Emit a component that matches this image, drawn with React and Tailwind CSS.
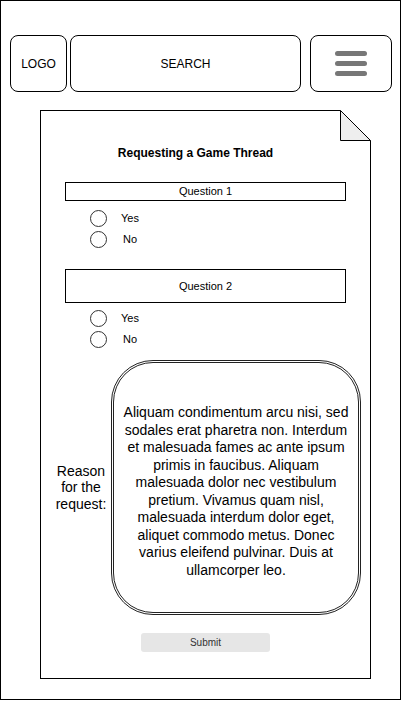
import React from 'react';

const font = { fontFamily: '"Liberation Sans", Arial, sans-serif' };

const Radio = ({ label, shift }) => (
  <div className="flex items-center h-[21px]">
    <span className="w-[17px] h-[17px] rounded-full border border-[#333] bg-white" />
    <span className={`text-[11px] text-black ${shift ? 'ml-[16px]' : 'ml-[14px]'}`}>{label}</span>
  </div>
);

const App = () => {
  return (
    <div className="bg-white w-[402px] h-[701px]" style={font}>
      <div className="w-[401px] h-[700px] border border-black flex flex-col">
        {/* header */}
        <div className="flex mt-[34px] ml-[9px]">
          <div className="w-[57px] h-[57px] border border-black rounded-[8px] flex items-center justify-center text-[12px]">
            LOGO
          </div>
          <div className="ml-[3px] w-[231px] h-[57px] border border-black rounded-[8px] flex items-center justify-center text-[12px]">
            SEARCH
          </div>
          <div className="ml-[9px] w-[82px] h-[57px] border border-black rounded-[8px] flex flex-col items-center justify-center gap-[5px]">
            <span className="w-[32px] h-[5px] rounded-full bg-[#777]" />
            <span className="w-[32px] h-[5px] rounded-full bg-[#777]" />
            <span className="w-[32px] h-[5px] rounded-full bg-[#777]" />
          </div>
        </div>

        {/* form document */}
        <div className="relative mt-[18px] ml-[39px] w-[331px] h-[569px] border border-black flex flex-col">
          <svg className="absolute -top-px -right-px" width="31" height="31" viewBox="0 0 31 31">
            <rect x="0" y="0" width="31" height="31" fill="#fff" />
            <polygon points="0.5,0.5 0.5,30.5 30.5,30.5" fill="#eeeeee" stroke="#000" strokeWidth="1" />
            <line x1="0" y1="0.5" x2="0.5" y2="0.5" stroke="#000" />
            <line x1="30.5" y1="30.5" x2="30.5" y2="31" stroke="#000" />
          </svg>

          <div className="mt-[35px] pr-[20px] text-center text-[12px] font-bold leading-[14px]">
            Requesting a Game Thread
          </div>

          <div className="mt-[22px] ml-[24px] w-[281px] h-[19px] border border-black flex items-center justify-center text-[11px]">
            Question 1
          </div>
          <div className="ml-[49px] mt-[7px] flex flex-col">
            <Radio label="Yes" />
            <Radio label="No" shift />
          </div>

          <div className="mt-[19px] ml-[24px] w-[281px] h-[34px] border border-black flex items-center justify-center text-[11px]">
            Question 2
          </div>
          <div className="ml-[49px] mt-[5px] flex flex-col">
            <Radio label="Yes" />
            <Radio label="No" shift />
          </div>

          <div className="mt-[10px] pl-[13px] flex items-center">
            <div className="w-[54px] text-center text-[14px] leading-[16.5px]">Reason for the request:</div>
            <div className="ml-[3px] w-[250px] h-[255px] border-[3px] border-double border-[#222] rounded-[42px] flex items-center justify-center px-[6px] pt-[8px] text-center text-[14px] leading-[17.5px]">
              Aliquam condimentum arcu nisi, sed sodales erat pharetra non. Interdum et malesuada fames ac ante ipsum primis in faucibus. Aliquam malesuada dolor nec vestibulum pretium. Vivamus quam nisl, malesuada interdum dolor eget, aliquet commodo metus. Donec varius eleifend pulvinar. Duis at ullamcorper leo.
            </div>
          </div>

          <div className="mt-[18px] ml-[100px] w-[129px] h-[19px] rounded-[3px] bg-[#e6e6e6] flex items-center justify-center text-[10px] text-[#333]">
            Submit
          </div>
        </div>
      </div>
    </div>
  );
};

export default App;
